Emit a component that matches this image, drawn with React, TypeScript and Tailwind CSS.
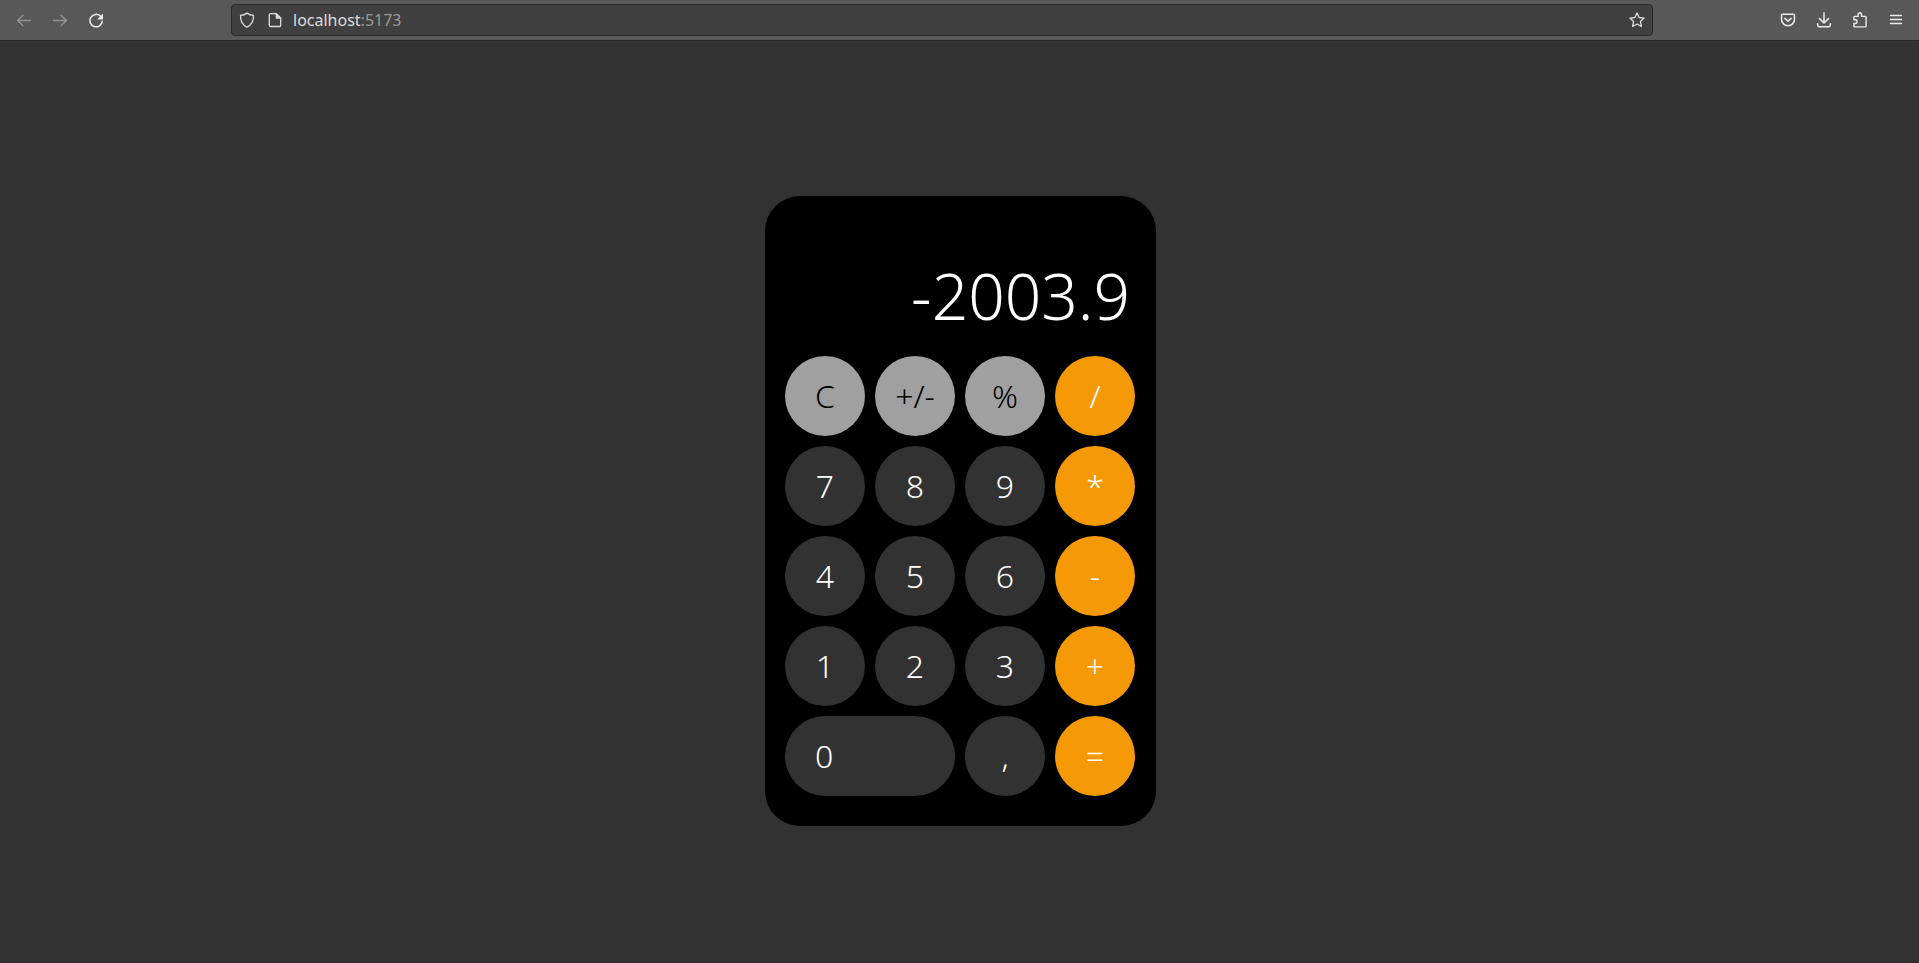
import type { ReactNode } from "react";

type Tone = "gray" | "dark" | "orange";

const tones: Record<Tone, string> = {
  gray: "bg-[#a0a0a0] text-black",
  dark: "bg-[#323232] text-white",
  orange: "bg-[#f69906] text-white",
};

const keys: { label: string; tone: Tone; wide?: boolean }[] = [
  { label: "C", tone: "gray" },
  { label: "+/-", tone: "gray" },
  { label: "%", tone: "gray" },
  { label: "/", tone: "orange" },
  { label: "7", tone: "dark" },
  { label: "8", tone: "dark" },
  { label: "9", tone: "dark" },
  { label: "*", tone: "orange" },
  { label: "4", tone: "dark" },
  { label: "5", tone: "dark" },
  { label: "6", tone: "dark" },
  { label: "-", tone: "orange" },
  { label: "1", tone: "dark" },
  { label: "2", tone: "dark" },
  { label: "3", tone: "dark" },
  { label: "+", tone: "orange" },
  { label: "0", tone: "dark", wide: true },
  { label: ",", tone: "dark" },
  { label: "=", tone: "orange" },
];

function Icon({ children }: { children: ReactNode }) {
  return (
    <svg
      viewBox="0 0 16 16"
      className="size-4"
      fill="none"
      stroke="currentColor"
      strokeWidth="1.3"
      strokeLinecap="round"
      strokeLinejoin="round"
      aria-hidden="true"
    >
      {children}
    </svg>
  );
}

function BarButton({ label, disabled, children }: { label: string; disabled?: boolean; children: ReactNode }) {
  return (
    <button
      type="button"
      aria-label={label}
      disabled={disabled}
      className="flex size-8 items-center justify-center rounded text-[#ececec] disabled:text-[#949494]"
    >
      {children}
    </button>
  );
}

function Toolbar() {
  return (
    <header className="flex h-[41px] items-center border-b border-[#282828] bg-[#585858]">
      <nav className="flex w-[231px] shrink-0 gap-1 pl-2">
        <BarButton label="Back" disabled>
          <Icon>
            <path d="M14.5 8.5H1.7M7 3.2 1.6 8.5 7 13.8" />
          </Icon>
        </BarButton>
        <BarButton label="Forward" disabled>
          <Icon>
            <path d="M1.5 8.5h12.8M9 3.2l5.4 5.3L9 13.8" />
          </Icon>
        </BarButton>
        <BarButton label="Reload">
          <Icon>
            <path strokeWidth="1.5" d="M12.2 3.9A6.2 6.2 0 1 0 14.3 9.2" />
            <path fill="currentColor" stroke="none" d="M15 1.6v5.2c0 .4-.3.7-.7.7H9.2z" />
          </Icon>
        </BarButton>
      </nav>

      <div className="flex h-8 flex-1 items-center rounded border border-[#2a2a2a] bg-[#404040] pr-[7px] pl-[7px] text-[#dcdcdc]">
        <Icon>
          <path d="M8 1.1c1.8 1.3 4 2.1 6.5 2.3.2 5-1.4 9.3-6.5 11.8C2.9 12.7 1.3 8.4 1.5 3.4 4 3.2 6.2 2.4 8 1.1z" />
        </Icon>
        <span className="w-3" />
        <Icon>
          <path d="M3.5 1.7h5.8l4.400 4.400v7.200a1.200 1.200 0 0 1-1.200 1.200h-9a1.200 1.200 0 0 1-1.200-1.200V2.900a1.200 1.200 0 0 1 1.200-1.200z" />
          <path fill="currentColor" d="M9.300 1.700v4.400h4.400z" />
        </Icon>
        <a
          href="http://localhost:5173"
          className="ml-[10px] flex-1 font-['Noto_Sans',sans-serif] text-base leading-6"
        >
          localhost<span className="text-[#9a9a9a]">:5173</span>
        </a>
        <button type="button" aria-label="Bookmark this page">
          <Icon>
            <path d="M8 .9l2.1 4.6 5 .6-3.700 3.400 1 5L8 12l-4.400 2.500 1-5L.9 6.100l5-.6z" />
          </Icon>
        </button>
      </div>

      <div className="flex w-[266px] shrink-0 justify-end gap-1 pr-[7px]">
        <BarButton label="Save to Pocket">
          <Icon>
            <path
              strokeWidth="1.5"
              d="M2.700 2.300h10.600a1.200 1.200 0 0 1 1.200 1.200v3.800a6.500 6.500 0 0 1-13 0V3.500a1.200 1.200 0 0 1 1.200-1.200z"
            />
            <path strokeWidth="1.5" d="M4.900 6.400 8 9.300l3.100-2.900" />
          </Icon>
        </BarButton>
        <BarButton label="Downloads">
          <Icon>
            <path
              strokeWidth="1.5"
              d="M8 .8v10M3.500 6.600 8 11l4.500-4.400M1.700 11.800v1.500a1.400 1.400 0 0 0 1.400 1.400h9.800a1.400 1.400 0 0 0 1.400-1.400v-1.500"
            />
          </Icon>
        </BarButton>
        <BarButton label="Extensions">
          <Icon>
            <path
              strokeWidth="1.4"
              d="M1.900 6.800V5.200a.8.8 0 0 1 .8-.8h3.500V2.500a1.700 1.700 0 0 1 3.400 0v1.900h3.700a.8.8 0 0 1 .8.8v8.900a.8.8 0 0 1-.8.8H2.700a.8.8 0 0 1-.8-.8v-2.600h1.700a1.900 1.900 0 0 0 0-3.700H1.900z"
            />
          </Icon>
        </BarButton>
        <BarButton label="Open menu">
          <Icon>
            <path d="M2.500 3.500h11M2.500 7.500h11M2.500 11.500h11" />
          </Icon>
        </BarButton>
      </div>
    </header>
  );
}

function Calculator() {
  return (
    <section
      aria-label="Calculator"
      className="w-[391px] rounded-[35px] bg-black px-5 pt-[68px] pb-[30px] font-['Noto_Sans',sans-serif] font-light"
    >
      <output className="mb-7 block pr-[6px] text-right text-[64px] leading-none text-white">-2003.9</output>
      <div className="grid w-[350px] grid-cols-4 gap-[10px]">
        {keys.map(({ label, tone, wide }) => (
          <button
            key={label}
            type="button"
            className={`h-20 rounded-full text-[32px] leading-none ${tones[tone]} ${wide ? "col-span-2 pl-[30px] text-left" : ""}`}
          >
            {label}
          </button>
        ))}
      </div>
    </section>
  );
}

export default function App() {
  return (
    <div className="flex min-h-screen flex-col border-b border-[#2e282c] bg-[#323232]">
      <Toolbar />
      <main className="flex flex-1 items-center justify-center pt-[19px] pl-[2px]">
        <Calculator />
      </main>
    </div>
  );
}
